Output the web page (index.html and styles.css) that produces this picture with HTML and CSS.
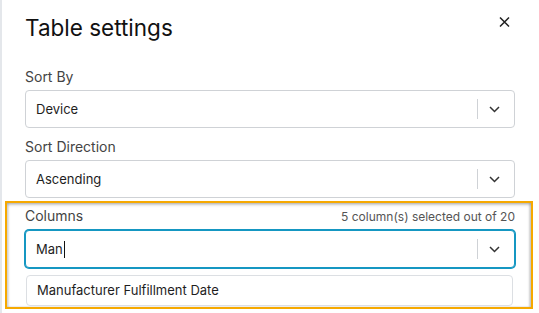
FILE: index.html
```html
<!DOCTYPE html>
<html lang="en">
<head>
<meta charset="utf-8">
<title>Table settings</title>
<link rel="stylesheet" href="styles.css">
</head>
<body>
<div class="panel">
  <header class="head">
    <h1 class="title">Table settings</h1>
    <button class="close" aria-label="Close">
      <svg width="11" height="10" viewBox="0 0 11 10"><path d="M1 0.5 L10 9.5 M10 0.5 L1 9.5" stroke="#222" stroke-width="1.5" fill="none"/></svg>
    </button>
  </header>

  <div class="field">
    <label class="label">Sort By</label>
    <div class="select">
      <span class="value">Device</span>
      <span class="sep"></span>
      <span class="chev"><svg width="11" height="7" viewBox="0 0 11 7"><path d="M1 1 L5.5 5.5 L10 1" stroke="#333" stroke-width="1.5" fill="none"/></svg></span>
    </div>
  </div>

  <div class="field">
    <label class="label">Sort Direction</label>
    <div class="select">
      <span class="value">Ascending</span>
      <span class="sep"></span>
      <span class="chev"><svg width="11" height="7" viewBox="0 0 11 7"><path d="M1 1 L5.5 5.5 L10 1" stroke="#333" stroke-width="1.5" fill="none"/></svg></span>
    </div>
  </div>

  <div class="highlight">
    <div class="field-head">
      <label class="label">Columns</label>
      <span class="count">5 column(s) selected out of 20</span>
    </div>
    <div class="select focused">
      <span class="value">Man<span class="caret"></span></span>
      <span class="sep"></span>
      <span class="chev"><svg width="11" height="7" viewBox="0 0 11 7"><path d="M1 1 L5.5 5.5 L10 1" stroke="#333" stroke-width="1.5" fill="none"/></svg></span>
    </div>
    <div class="menu">
      <div class="option">Manufacturer Fulfillment Date</div>
    </div>
  </div>
</div>
</body>
</html>
```

FILE: styles.css
```css
html, body {
  margin: 0;
  padding: 0;
  background: #fff;
}
body {
  width: 539px;
  height: 313px;
  overflow: hidden;
  font-family: Inter, "Noto Sans", sans-serif;
  color: #222;
}
.panel {
  box-sizing: border-box;
  height: 313px;
  border-left: 2px solid #e4e7eb;
  padding: 14px 24px 0 23px;
}
.head {
  display: flex;
  justify-content: space-between;
  align-items: flex-start;
  margin-bottom: 25px;
}
.title {
  margin: 0;
  font-size: 22.5px;
  line-height: 28px;
  font-weight: 400;
  color: #111;
}
.close {
  margin: 3px 5px 0 0;
  padding: 0;
  border: 0;
  background: none;
  width: 11px;
  height: 10px;
  display: block;
}
.close svg { display: block; }
.field {
  margin-bottom: 9px;
}
.field:nth-of-type(2) { margin-bottom: 3px; }
.label {
  display: block;
  font-size: 14px;
  line-height: 20px;
  color: #444;
  margin-bottom: 3px;
}
.select {
  box-sizing: border-box;
  height: 38px;
  border: 1px solid #cfd2d6;
  border-radius: 4px;
  display: flex;
  align-items: center;
  background: #fff;
}
.value {
  flex: 1;
  padding-left: 10px;
  font-size: 13px;
  color: #1e1e1e;
  display: flex;
  align-items: center;
}
.sep {
  width: 1px;
  height: 20px;
  background: #cfd2d6;
}
.chev {
  padding: 0 14px 0 11px;
  display: flex;
  align-items: center;
}
.chev svg { display: block; }
.highlight {
  margin: 0 -18px 0 -20px;
  border: 2px solid #f6a900;
  padding: 3px 16px 1px 18px;
  box-shadow: inset 0 2px 3px rgba(0,0,0,0.22), inset 2px 0 2px rgba(0,0,0,0.1), inset -2px 0 2px rgba(0,0,0,0.15);
}
.field-head {
  display: flex;
  justify-content: space-between;
  align-items: baseline;
  margin-bottom: 4px;
}
.field-head .label { margin-bottom: 0; }
.count {
  font-size: 12px;
  color: #555;
}
.focused {
  border-color: #1597c2;
  box-shadow: 0 0 0 1px #1597c2;
}
.caret {
  display: inline-block;
  width: 1px;
  height: 17px;
  background: #111;
  margin-left: 1px;
}
.menu {
  margin: 7px 2px 0 1px;
}
.option {
  box-sizing: border-box;
  height: 31px;
  border: 1px solid #dcdfe3;
  border-radius: 4px;
  padding: 0 10px;
  font-size: 13px;
  line-height: 29px;
  color: #1e1e1e;
}
```
